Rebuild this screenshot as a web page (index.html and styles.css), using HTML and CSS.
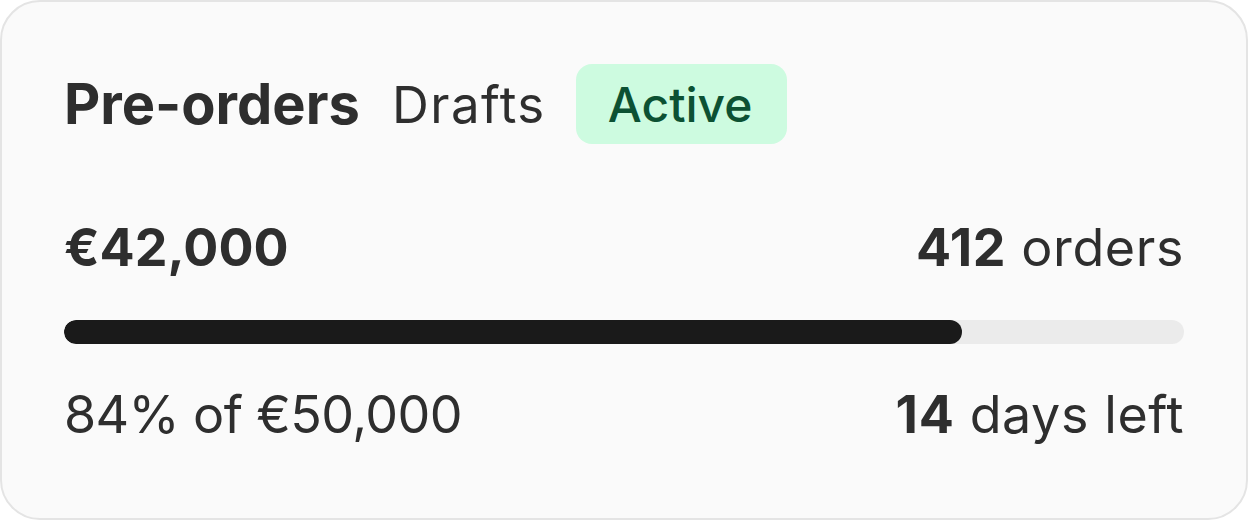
FILE: index.html
```html
<!DOCTYPE html>
<html lang="en">
<head>
    <meta charset="UTF-8">
    <meta name="viewport" content="width=device-width, initial-scale=1.0">
    <title> Pre-orders </title>
    <link rel="stylesheet" href="styles.css">
</head>
<body>

    <div class="card">
        <div class="card_head">
            <span class="title">Pre-orders</span>
            <span class="tab">Drafts</span>
            <span class="badge">Active</span>
        </div>

        <div class="row row_top">
            <span class="amount">€42,000</span>
            <span class="meta"><strong>412</strong> orders</span>
        </div>

        <div class="bar">
            <div class="bar_fill" style="width: 80.2%;"></div>
        </div>

        <div class="row row_bottom">
            <span class="progress_txt">84% of €50,000</span>
            <span class="meta"><strong>14</strong> days left</span>
        </div>
    </div>

</body>
</html>
```

FILE: styles.css
```css
body {
    margin: 0;
    background: #ffffff;
    font-family: Inter, "Noto Sans", sans-serif;
    color: #2e2e2e;
}
.card {
    box-sizing: border-box;
    width: 1248px;
    height: 520px;
    padding: 62px;
    border: 2px solid #e4e4e4;
    border-radius: 40px;
    background: #fafafa;
}
.card_head {
    display: flex;
    align-items: center;
    gap: 32px;
}
.title {
    font-size: 56px;
    font-weight: 700;
}
.tab {
    font-size: 51px;
    font-weight: 400;
    letter-spacing: 1.5px;
    margin-right: -2px;
}
.badge {
    display: flex;
    align-items: center;
    height: 80px;
    padding: 0 35px 0 32px;
    border-radius: 16px;
    background: #cdfbe0;
    color: #0c5133;
    font-size: 48px;
    font-weight: 500;
}
.row {
    display: flex;
    justify-content: space-between;
    align-items: baseline;
    font-size: 52px;
    line-height: 62px;
}
.row strong {
    font-weight: 700;
}
.row_top {
    margin-top: 73px;
}
.amount {
    font-weight: 700;
}
.meta {
    letter-spacing: 0.6px;
}
.progress_txt {
    letter-spacing: -0.6px;
}
.bar {
    height: 24px;
    margin-top: 41px;
    border-radius: 12px;
    background: #ebebeb;
    overflow: hidden;
}
.bar_fill {
    height: 100%;
    border-radius: 12px;
    background: #1a1a1a;
}
.row_bottom {
    margin-top: 40px;
}
```
